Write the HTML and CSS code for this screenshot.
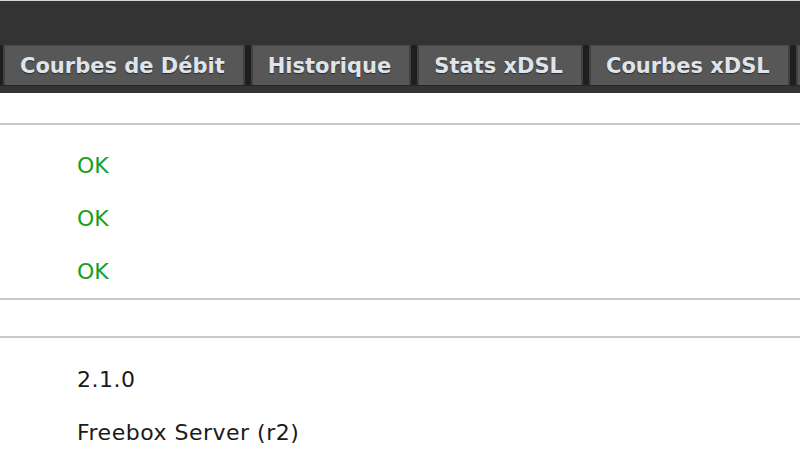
FILE: index.html
```html
<!DOCTYPE html>
<html lang="fr">
<head>
<meta charset="utf-8">
<title>Freebox</title>
<link rel="stylesheet" href="styles.css">
</head>
<body>
<header class="topbar">
  <nav class="tabs">
    <div class="tab">Courbes de Débit</div>
    <div class="tab">Historique</div>
    <div class="tab">Stats xDSL</div>
    <div class="tab">Courbes xDSL</div>
    <div class="tab stub"></div>
  </nav>
</header>
<main class="content">
  <section class="block">
    <div class="row ok">OK</div>
    <div class="row ok">OK</div>
    <div class="row ok">OK</div>
  </section>
  <section class="block empty"></section>
  <section class="block">
    <div class="row">2.1.0</div>
    <div class="row">Freebox Server (r2)</div>
  </section>
</main>
</body>
</html>
```
FILE: styles.css
```css
html, body {
  margin: 0;
  padding: 0;
  background: #ffffff;
  width: 800px;
  height: 450px;
  overflow: hidden;
}

.topbar {
  height: 92px;
  border-top: 1px solid #d6d6d6;
  background: #333334;
  display: flex;
  flex-direction: column;
  justify-content: flex-end;
  overflow: hidden;
}

.tabs {
  display: flex;
  gap: 2px;
  height: 40px;
  padding-left: 3px;
  margin-bottom: 7px;
  background: #1f1f1f;
  border-bottom: 1px solid #262626;
  white-space: nowrap;
}

.tab {
  flex: none;
  display: flex;
  align-items: center;
  padding: 0 18px 0 15px;
  background: #575757;
  border-left: 2px solid #404040;
  border-right: 2px solid #404040;
  border-top: 1px solid #474747;
  font-family: "DejaVu Sans", Verdana, sans-serif;
  font-weight: bold;
  font-size: 21px;
  color: #dfe4eb;
  text-shadow: 0 1px 1px #2a2a2a;
}

.tabs {
  gap: 6px;
}

.tab.stub {
  width: 60px;
  padding: 0;
}

.content {
  padding-top: 30px;
}

.block {
  border-top: 2px solid #c9c9c9;
  padding: 14px 0 0 0;
}

.block.empty {
  height: 36px;
  padding: 0;
}

.block + .block:last-child {
  padding-top: 15px;
}

.row {
  height: 53px;
  line-height: 53px;
  padding-left: 77px;
  font-family: "DejaVu Sans", Tahoma, sans-serif;
  font-size: 22px;
  letter-spacing: 0.5px;
  color: #1a1a1a;
}

.row.ok {
  color: #17a01f;
  letter-spacing: 0;
}
```
